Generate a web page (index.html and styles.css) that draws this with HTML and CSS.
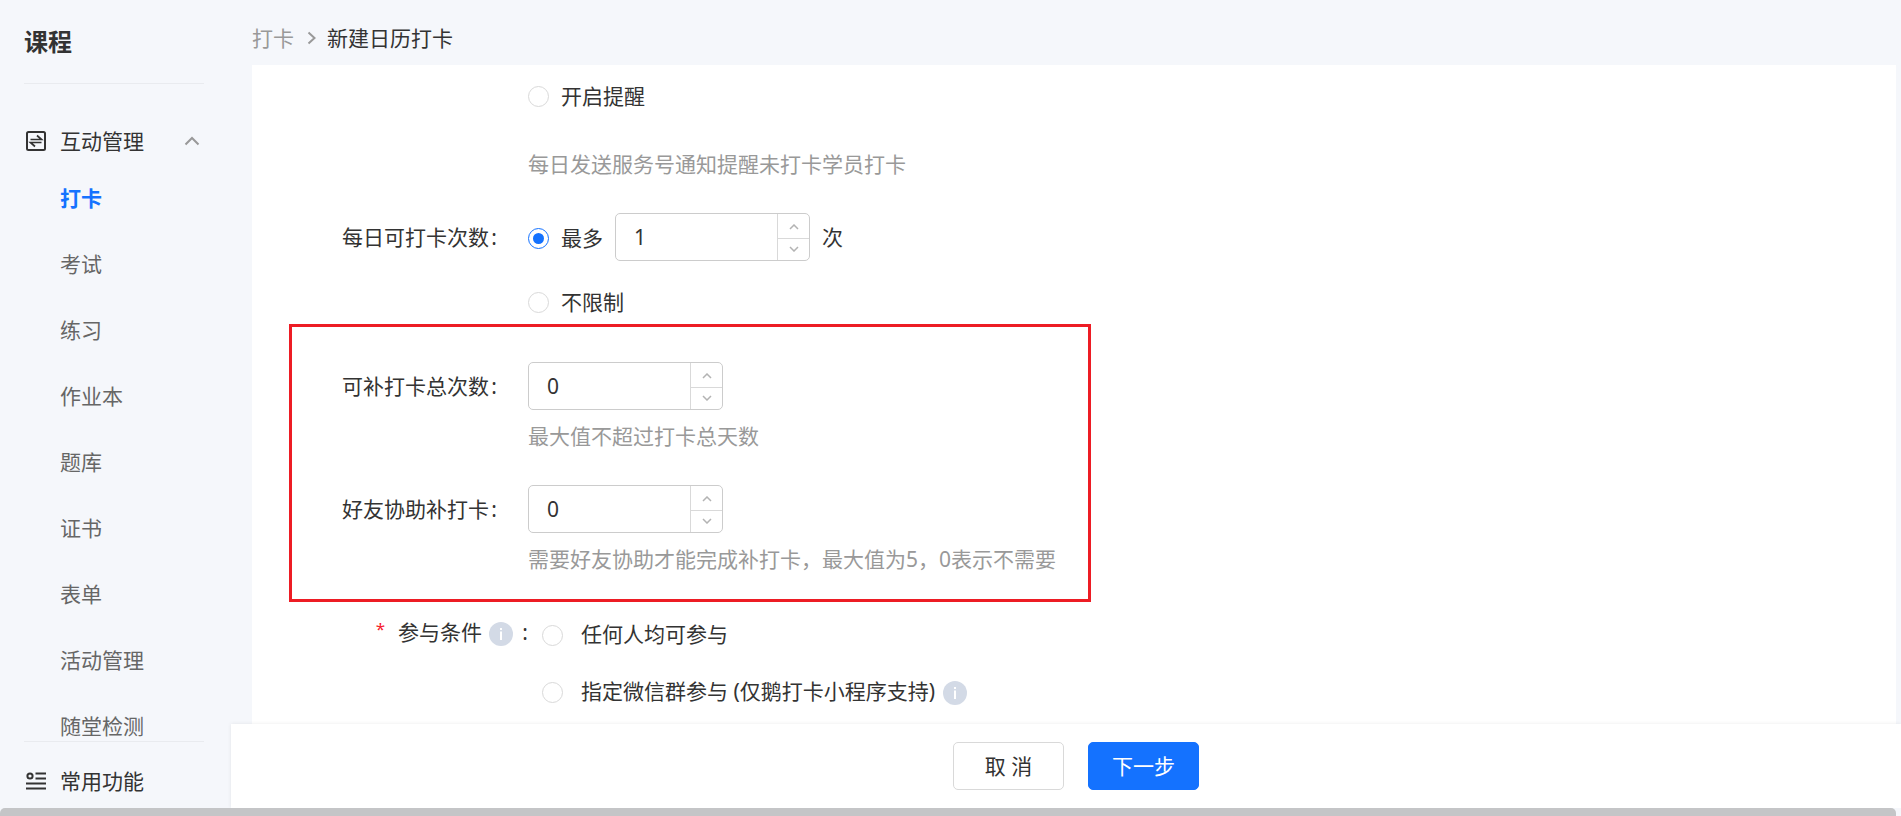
FILE: index.html
```html
<!DOCTYPE html>
<html lang="zh-CN">
<head>
  <meta charset="UTF-8">
  <meta name="viewport" content="width=device-width, initial-scale=1.0">
  <title>新建日历打卡</title>
  <link rel="stylesheet" href="styles.css">
</head>
<body>

  <div class="app">
    <!-- Sidebar -->
    <aside class="sidebar">
      <div class="sidebar-title">课程</div>

      <div class="menu">
        <div class="menu-group">
          <svg class="menu-icon" viewBox="0 0 20 20" fill="none" stroke="#333" stroke-width="2">
            <rect x="1" y="1" width="18" height="18" rx="1.5"/>
            <path d="M4.5 8.500h11L11 4.500M15.500 11.500h-11L9 15.500" stroke-width="1.700"/>
          </svg>
          <span>互动管理</span>
          <svg class="menu-arrow" viewBox="0 0 16 10" fill="none" stroke="#999" stroke-width="2">
            <path d="M1.5 8.5L8 2l6.500 6.500"/>
          </svg>
        </div>
        <a class="menu-item active">打卡</a>
        <a class="menu-item">考试</a>
        <a class="menu-item">练习</a>
        <a class="menu-item">作业本</a>
        <a class="menu-item">题库</a>
        <a class="menu-item">证书</a>
        <a class="menu-item">表单</a>
        <a class="menu-item">活动管理</a>
        <a class="menu-item">随堂检测</a>
      </div>

      <div class="menu-common">
        <svg class="menu-icon" viewBox="0 0 20 20" fill="none" stroke="#333" stroke-width="2">
          <circle cx="4" cy="5" r="2.600"/>
          <path d="M9.500 2.500H20M9.500 7.500H20M0 12.500h20M0 17.500h20"/>
        </svg>
        <span>常用功能</span>
      </div>
    </aside>

    <!-- Main area -->
    <main class="main">
      <div class="breadcrumb">
        <span class="crumb">打卡</span>
        <svg class="crumb-arrow" viewBox="0 0 9 14" fill="none" stroke="#999" stroke-width="2">
          <path d="M1.500 1.500L7.500 7l-6 5.500"/>
        </svg>
        <span>新建日历打卡</span>
      </div>

      <div class="panel">
        <div class="form-row row-remind">
          <div class="form-control">
            <label class="radio-label"><i class="radio"></i>开启提醒</label>
            <p class="hint">每日发送服务号通知提醒未打卡学员打卡</p>
          </div>
        </div>

        <div class="form-row row-times">
          <div class="form-label">每日可打卡次数<span class="colon">:</span></div>
          <div class="form-control">
            <div class="inline">
              <label class="radio-label"><i class="radio checked"></i>最多</label>
              <div class="number-input">
                <span class="value">1</span>
                <div class="handlers">
                  <span><svg viewBox="0 0 10 6"><path d="M1 5l4-4 4 4"/></svg></span>
                  <span><svg viewBox="0 0 10 6"><path d="M1 1l4 4 4-4"/></svg></span>
                </div>
              </div>
              <span>次</span>
            </div>
            <label class="radio-label unlimited"><i class="radio"></i>不限制</label>
          </div>
        </div>

        <div class="form-row row-makeup">
          <div class="form-label">可补打卡总次数<span class="colon">:</span></div>
          <div class="form-control">
            <div class="number-input">
              <span class="value">0</span>
              <div class="handlers">
                <span><svg viewBox="0 0 10 6"><path d="M1 5l4-4 4 4"/></svg></span>
                <span><svg viewBox="0 0 10 6"><path d="M1 1l4 4 4-4"/></svg></span>
              </div>
            </div>
            <p class="hint">最大值不超过打卡总天数</p>
          </div>
        </div>

        <div class="form-row row-friend">
          <div class="form-label">好友协助补打卡<span class="colon">:</span></div>
          <div class="form-control">
            <div class="number-input">
              <span class="value">0</span>
              <div class="handlers">
                <span><svg viewBox="0 0 10 6"><path d="M1 5l4-4 4 4"/></svg></span>
                <span><svg viewBox="0 0 10 6"><path d="M1 1l4 4 4-4"/></svg></span>
              </div>
            </div>
            <p class="hint">需要好友协助才能完成补打卡，最大值为5，0表示不需要</p>
          </div>
        </div>

        <div class="form-row row-join">
          <div class="form-label join-label">
            <span class="required">*</span>参与条件
            <svg class="info" viewBox="0 0 24 24"><circle cx="12" cy="12" r="12" fill="#d3dae6"/><path d="M11 6h2v2h-2zM11 9.500h2V18h-2z" fill="#fff"/></svg>
            <span class="join-colon">:</span>
          </div>
          <div class="form-control join-control">
            <label class="radio-label"><i class="radio"></i>任何人均可参与</label>
            <label class="radio-label">
              <i class="radio"></i>指定微信群参与 (仅鹅打卡小程序支持)
              <svg class="info" viewBox="0 0 24 24"><circle cx="12" cy="12" r="12" fill="#d3dae6"/><path d="M11 6h2v2h-2zM11 9.500h2V18h-2z" fill="#fff"/></svg>
            </label>
          </div>
        </div>

        <!-- Red frame over the make-up settings -->
        <div class="highlight"></div>
      </div>

      <div class="footer">
        <button class="btn">取 消</button>
        <button class="btn btn-primary">下一步</button>
      </div>
    </main>
  </div>

  <div class="scrollbar"><div class="thumb"></div></div>

</body>
</html>
```

FILE: styles.css
```css
/* Reset and basic styles */
* {
  margin: 0;
  padding: 0;
  box-sizing: border-box;
}

body {
  height: 100vh;
  display: flex;
  flex-direction: column;
  overflow: hidden;
  background: #f5f7fb;
  color: #333;
  font-family: "Noto Sans", "Noto Sans CJK SC", sans-serif;
  font-size: 21px;
  line-height: 30px;
}

svg {
  display: block;
  flex: none;
}

.app {
  flex: 1;
  min-height: 0;
  display: flex;
}

/* Sidebar */
.sidebar {
  width: 231px;
  padding: 0 27px 0 24px;
  display: flex;
  flex-direction: column;
}

.sidebar-title {
  height: 84px;
  padding-top: 27px;
  border-bottom: 1px solid #e9ebef;
  font-size: 24px;
  font-weight: bold;
}

.menu {
  height: 657px;
  overflow: hidden;
}

.menu-group {
  height: 81px;
  padding: 33px 4px 0 2px;
  display: flex;
  align-items: center;
}

.menu-icon {
  width: 20px;
  height: 20px;
  margin-right: 14px;
}

.menu-arrow {
  width: 16px;
  height: 10px;
  margin-left: auto;
}

.menu-item {
  display: block;
  height: 66px;
  padding-left: 36px;
  line-height: 66px;
  color: #666;
}

.menu-item.active {
  color: #1472ff;
  font-weight: bold;
}

.menu-common {
  flex: 1;
  padding: 12px 0 0 2px;
  border-top: 1px solid #e9ebef;
  display: flex;
  align-items: center;
}

/* Main area */
.main {
  flex: 1;
  display: flex;
  flex-direction: column;
}

.breadcrumb {
  height: 65px;
  padding: 11px 0 0 21px;
  display: flex;
  align-items: center;
}

.crumb {
  color: #999;
}

.crumb-arrow {
  width: 9px;
  height: 14px;
  margin: 0 11px 0 13px;
}

.panel {
  position: relative;
  flex: 1;
  min-height: 0;
  overflow: hidden;
  margin: 0 5px 0 21px;
  padding-top: 16px;
  background: #fff;
}

/* Form */
.form-row {
  display: flex;
}

.form-label {
  width: 276px;
  padding-right: 31px;
  line-height: 48px;
  text-align: right;
}

.colon {
  display: inline-block;
  width: 8px;
}

.row-remind {
  height: 132px;
  padding-left: 276px;
}

.row-times {
  height: 149px;
}

.row-makeup,
.row-friend {
  height: 123px;
}

.inline {
  display: flex;
  align-items: center;
  gap: 12px;
}

.inline .radio-label {
  padding-top: 2px;
}

.radio-label {
  display: flex;
  align-items: center;
}

.radio {
  width: 21px;
  height: 21px;
  margin-top: 1px;
  margin-right: 12px;
  border: 1px solid #d9d9d9;
  border-radius: 50%;
  background: #fff;
}

.radio.checked {
  margin-top: 0;
  padding: 4px;
  border-color: #1472ff;
  background: #1472ff content-box;
}

.unlimited {
  margin-top: 26px;
}

.hint {
  color: #999;
}

.row-remind .hint {
  margin-top: 38px;
}

.row-makeup .hint,
.row-friend .hint {
  margin-top: 11px;
}

.number-input {
  width: 195px;
  height: 48px;
  border: 1px solid #ccc;
  border-radius: 5px;
  display: flex;
  overflow: hidden;
  background: #fff;
}

.value {
  flex: 1;
  padding-left: 18px;
  line-height: 46px;
}

.handlers {
  width: 32px;
  border-left: 1px solid #d9d9d9;
  display: flex;
  flex-direction: column;
}

.handlers span {
  flex: 1;
  display: flex;
  align-items: center;
  justify-content: center;
}

.handlers span:first-child {
  padding-top: 2px;
}

.handlers span + span {
  border-top: 1px solid #d9d9d9;
}

.handlers svg {
  width: 10px;
  height: 6px;
  fill: none;
  stroke: #b3b3b3;
  stroke-width: 1.5;
}

.info {
  width: 24px;
  height: 24px;
}

.join-label {
  height: 48px;
  padding-right: 0;
  display: flex;
  justify-content: flex-end;
  align-items: center;
}

.join-label .info {
  margin: 3px 0 0 7px;
}

.join-colon {
  width: 12px;
  margin-left: 3px;
}

.required {
  margin-right: 13px;
  padding-bottom: 6px;
  color: #f5222d;
  font-size: 17px;
}

.join-control {
  padding: 11px 0 0 14px;
  display: flex;
  flex-direction: column;
  gap: 27px;
}

.join-control .radio {
  margin-top: 2px;
  margin-right: 18px;
}

.join-control .info {
  margin: 4px 0 0 8px;
}

.highlight {
  position: absolute;
  left: 37px;
  top: 259px;
  width: 802px;
  height: 278px;
  border: 3px solid #ed1c24;
}

/* Footer buttons */
.footer {
  z-index: 1;
  height: 84px;
  padding-left: 722px;
  display: flex;
  align-items: center;
  gap: 24px;
  background: #fff;
  box-shadow: 0 0 4px rgba(0, 0, 0, 0.08);
}

.btn {
  width: 111px;
  height: 48px;
  border: 1px solid #d9d9d9;
  border-radius: 5px;
  background: #fff;
  color: #333;
  font: inherit;
}

.btn-primary {
  border-color: #1472ff;
  background: #1472ff;
  color: #fff;
}

/* Horizontal scrollbar */
.scrollbar {
  z-index: 2;
  height: 8px;
  padding-right: 5px;
  background: #f5f7fb;
}

.thumb {
  height: 8px;
  border-radius: 5px 5px 0 0;
  background: #c4c5c7;
}
```
